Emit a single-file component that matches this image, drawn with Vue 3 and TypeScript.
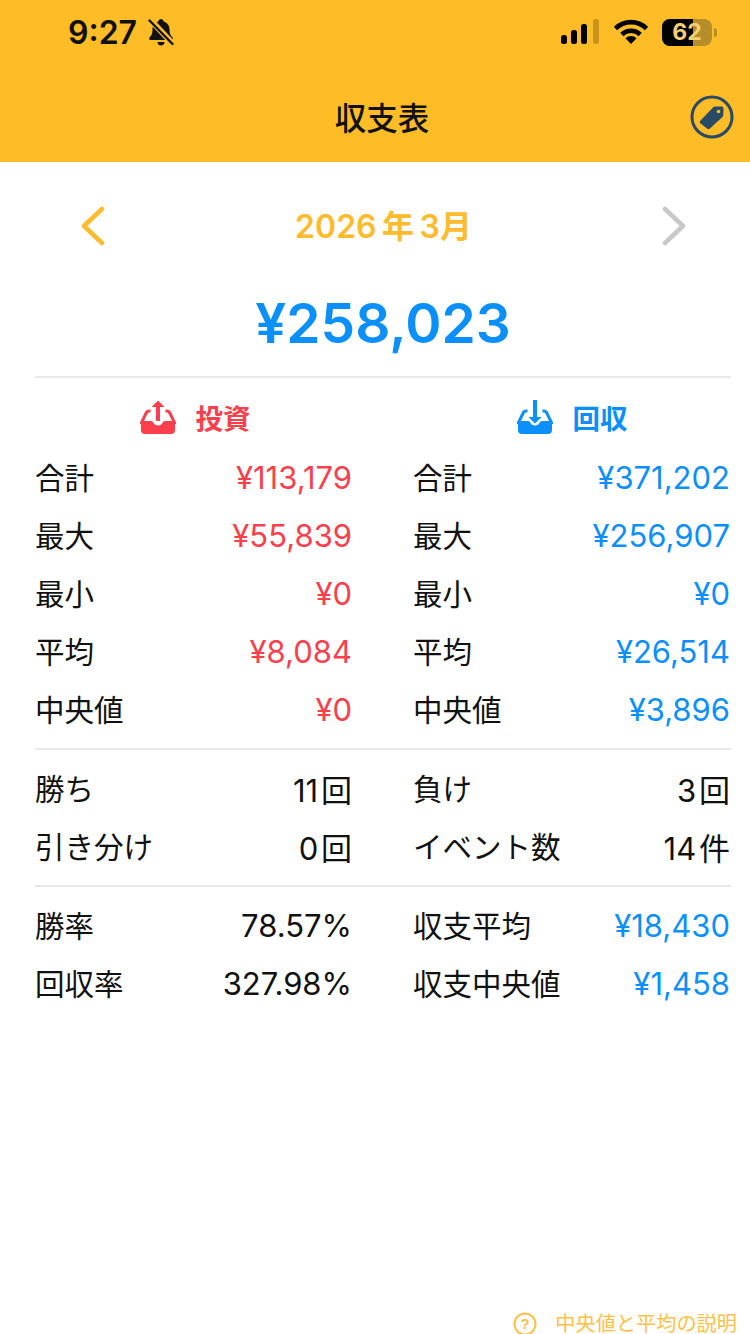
<script setup lang="ts">
type Row = { label: string; value: string; tone?: 'out' | 'in' }

const outRows: Row[] = [
  { label: '合計', value: '¥113,179', tone: 'out' },
  { label: '最大', value: '¥55,839', tone: 'out' },
  { label: '最小', value: '¥0', tone: 'out' },
  { label: '平均', value: '¥8,084', tone: 'out' },
  { label: '中央値', value: '¥0', tone: 'out' },
]
const inRows: Row[] = [
  { label: '合計', value: '¥371,202', tone: 'in' },
  { label: '最大', value: '¥256,907', tone: 'in' },
  { label: '最小', value: '¥0', tone: 'in' },
  { label: '平均', value: '¥26,514', tone: 'in' },
  { label: '中央値', value: '¥3,896', tone: 'in' },
]
const countLeft: Row[] = [
  { label: '勝ち', value: '11\u200a回' },
  { label: '引き分け', value: '0\u200a回' },
]
const countRight: Row[] = [
  { label: '負け', value: '3\u200a回' },
  { label: 'イベント数', value: '14\u200a件' },
]
const rateLeft: Row[] = [
  { label: '勝率', value: '78.57%' },
  { label: '回収率', value: '327.98%' },
]
const rateRight: Row[] = [
  { label: '収支平均', value: '¥18,430', tone: 'in' },
  { label: '収支中央値', value: '¥1,458', tone: 'in' },
]
const sections: Row[][][] = [
  [outRows, inRows],
  [countLeft, countRight],
  [rateLeft, rateRight],
]
</script>

<template>
  <div class="page">
    <header class="header">
      <div class="status">
        <div class="status-left">
          <span class="time">9:27</span>
          <svg class="bell" width="28" height="30" viewBox="0 0 28 30">
            <path d="M14 2c1.5 0 2.500 1 2.700 2.400 3.600 1 5.800 4.200 5.800 8.100 0 4 1 6 3 8 .8.900.3 2.500-1 2.500H3.500c-1.300 0-1.800-1.600-1-2.500 2-2 3-4 3-8 0-3.900 2.200-7.100 5.800-8.100C11.500 3 12.500 2 14 2z" fill="#111" />
            <path d="M10.500 25h7a3.500 3.500 0 0 1-7 0z" fill="#111" />
            <path d="M3 2.500 26 27" stroke="#febd26" stroke-width="6" />
            <path d="M2.500 3.500 25.500 27" stroke="#111" stroke-width="2.400" stroke-linecap="round" />
          </svg>
        </div>
        <div class="status-right">
          <svg width="40" height="28" viewBox="0 0 40 28">
            <rect x="1" y="17" width="6" height="9" rx="2.500" fill="#000" />
            <rect x="11" y="12" width="6" height="14" rx="2.500" fill="#000" />
            <rect x="21" y="6" width="6" height="20" rx="2.500" fill="#000" />
            <rect x="33" y="1" width="6" height="25" rx="2.500" fill="#000" opacity=".22" />
          </svg>
          <svg class="wifi" width="34" height="26" viewBox="0 0 34 26">
            <path d="M1.500 9.500a22 22 0 0 1 31 0" fill="none" stroke="#000" stroke-width="4.600" />
            <path d="M7.800 15.500a13.200 13.200 0 0 1 18.400 0" fill="none" stroke="#000" stroke-width="4.600" />
            <path d="M17 25l-5.600-5.800a8 8 0 0 1 11.200 0z" fill="#000" />
          </svg>
          <div class="battery">
            <div class="battery-body">
              <div class="battery-fill"></div>
              <span class="battery-num">62</span>
            </div>
            <span class="battery-cap"></span>
          </div>
        </div>
      </div>
      <div class="titlebar">
        <h1 class="title">収支表</h1>
        <svg class="tag" width="44" height="44" viewBox="0 0 44 44">
          <circle cx="22" cy="22" r="20" fill="none" stroke="#2b4a66" stroke-width="3" />
          <path d="M10.500 25.500 23 12.500c.6-.6 1.200-.9 2-.9l6.500-.2c1.200 0 2 .8 2 2l-.2 6.500c0 .8-.3 1.400-.9 2L20 33.500c-.9.900-2.100.9-3 0l-6.500-5c-1-1-1-2.100 0-3z" fill="#2b4a66" />
          <circle cx="28.500" cy="16.500" r="1.800" fill="#febd26" />
        </svg>
      </div>
    </header>

    <main class="body">
      <div class="month">
        <svg width="26" height="40" viewBox="0 0 26 40">
          <path d="M22 3 4 20l18 17" fill="none" stroke="#fdbb2d" stroke-width="4.500" stroke-linecap="round" stroke-linejoin="round" />
        </svg>
        <span class="month-label">2026<i class="gap"></i>年<i class="gap"></i>3月</span>
        <svg width="26" height="40" viewBox="0 0 26 40">
          <path d="M4 3l18 17L4 37" fill="none" stroke="#c8c8c8" stroke-width="4.500" stroke-linecap="round" stroke-linejoin="round" />
        </svg>
      </div>

      <div class="total">¥258,023</div>

      <div class="heads">
        <div class="head out">
          <svg width="36" height="36" viewBox="0 0 36 36">
            <path d="M18 1.500 11.500 8h4.500v14h4V8h4.500z" fill="#fb3f4c" />
            <path d="M10.500 12H9.300c-1.500 0-2.500.7-3.100 2L1.500 23.500H11c.6 0 1 .4 1.200 1 .7 2 3 3.500 5.800 3.500s5.100-1.500 5.800-3.500c.2-.6.600-1 1.200-1h9.500L29.800 14c-.6-1.300-1.600-2-3.100-2h-1.200" fill="none" stroke="#fb3f4c" stroke-width="3" />
            <path d="M1 23h10c.6 0 1 .3 1.200.9.800 2.300 3 3.600 5.800 3.600s5-1.300 5.800-3.600c.2-.6.600-.9 1.200-.9h10v8c0 2.500-1.500 4-4 4H5c-2.500 0-4-1.500-4-4z" fill="#fb3f4c" />
          </svg>
          <span>投資</span>
        </div>
        <div class="head in">
          <svg width="36" height="36" viewBox="0 0 36 36">
            <path d="M18 24.500l-6.500-6.500h4.500V1h4v17h4.500z" fill="#0b8ffb" />
            <path d="M10.500 12H9.300c-1.500 0-2.500.7-3.100 2L1.500 23.500H11c.6 0 1 .4 1.200 1 .7 2 3 3.500 5.800 3.500s5.100-1.500 5.800-3.500c.2-.6.600-1 1.200-1h9.500L29.800 14c-.6-1.300-1.600-2-3.100-2h-1.200" fill="none" stroke="#0b8ffb" stroke-width="3" />
            <path d="M1 23h10c.6 0 1 .3 1.200.9.800 2.300 3 3.600 5.800 3.600s5-1.300 5.800-3.600c.2-.6.600-.9 1.200-.9h10v8c0 2.500-1.500 4-4 4H5c-2.500 0-4-1.500-4-4z" fill="#0b8ffb" />
          </svg>
          <span>回収</span>
        </div>
      </div>

      <section v-for="(cols, i) in sections" :key="i" class="section">
        <div v-for="(col, j) in cols" :key="j" class="col">
          <div v-for="row in col" :key="row.label" class="row">
            <span class="label">{{ row.label }}</span>
            <span class="value" :class="row.tone">{{ row.value }}</span>
          </div>
        </div>
      </section>
    </main>

    <footer class="help">
      <svg width="24" height="24" viewBox="0 0 24 24">
        <circle cx="12" cy="12" r="10.500" fill="none" stroke="#fdc14a" stroke-width="2" />
        <text x="12" y="17" text-anchor="middle" class="help-q">?</text>
      </svg>
      <span>中央値と平均の説明</span>
    </footer>
  </div>
</template>

<style>
html,
body {
  margin: 0;
  background: #fff;
}
</style>

<style scoped>
.page {
  display: flex;
  flex-direction: column;
  width: 750px;
  height: 1334px;
  overflow: hidden;
  background: #fff;
  font-family: "Liberation Sans", "Noto Sans CJK JP", sans-serif;
  color: #111;
}

.header {
  flex: none;
  height: 162px;
  background: #febd26;
}

.status {
  display: flex;
  justify-content: space-between;
  align-items: center;
  height: 64px;
  padding: 0 33px 0 68px;
}

.status-left,
.status-right {
  display: flex;
  align-items: center;
}

.status-left {
  gap: 10px;
}

.status-right {
  gap: 14px;
}

.time {
  font-family: Inter, "Liberation Sans", sans-serif;
  font-size: 32px;
  font-weight: 600;
  color: #111;
}

.battery {
  display: flex;
  align-items: center;
  gap: 2px;
}

.battery-body {
  position: relative;
  width: 50px;
  height: 27px;
  border-radius: 8px;
  overflow: hidden;
  background: #b58e2b;
}

.battery-fill {
  width: 62%;
  height: 100%;
  background: #000;
}

.battery-num {
  position: absolute;
  inset: 0;
  text-align: center;
  line-height: 27px;
  font-family: Inter, "Liberation Sans", sans-serif;
  font-size: 23px;
  font-weight: 700;
  color: #f5cf73;
}

.battery-cap {
  width: 3px;
  height: 9px;
  border-radius: 0 3px 3px 0;
  background: #b58e2b;
}

.titlebar {
  position: relative;
  display: flex;
  justify-content: center;
  align-items: center;
  height: 98px;
  box-sizing: border-box;
  padding: 12px 0 0 14px;
}

.title {
  margin: 0;
  font-size: 31.5px;
  font-weight: 500;
  line-height: 40px;
}

.tag {
  position: absolute;
  right: 16px;
  top: 31px;
}

.body {
  padding: 0 19px 0 35px;
}

.month {
  display: flex;
  justify-content: space-between;
  align-items: center;
  height: 40px;
  margin-top: 44px;
  padding: 0 44px 0 45px;
}

.month-label {
  display: flex;
  align-items: baseline;
  padding: 0 0 4px 0;
  font-family: Inter, "Liberation Sans", "Noto Sans CJK JP", sans-serif;
  font-size: 32px;
  font-weight: 600;
  color: #fdbb2d;
}

.gap {
  width: 5.5px;
}

.total {
  margin-top: 42px;
  padding-bottom: 18px;
  border-bottom: 2px solid #e8e8e8;
  text-align: center;
  font-family: Inter, "Liberation Sans", sans-serif;
  font-size: 55px;
  font-weight: 600;
  line-height: 70px;
  color: #0b8ffb;
}

.heads {
  display: grid;
  grid-template-columns: 317px 318px;
  column-gap: 61px;
  margin: 21px 0 4px;
}

.head {
  display: flex;
  justify-content: center;
  align-items: center;
  gap: 20px;
  height: 36px;
  font-size: 27.5px;
  font-weight: 700;
}

.head.out {
  padding-left: 3px;
  color: #fb3f4c;
}

.head.in {
  color: #0b8ffb;
}

.section {
  display: grid;
  grid-template-columns: 317px 317px;
  column-gap: 61px;
  padding: 8px 1px 11px 0;
  border-bottom: 2px solid #e8e8e8;
}

.section:last-of-type {
  border-bottom: 0;
}

.row {
  display: flex;
  justify-content: space-between;
  align-items: center;
  height: 58px;
  font-size: 29.5px;
}

.label {
  padding-bottom: 1px;
}

.value {
  padding-top: 3px;
  font-family: Inter, "Liberation Sans", "Noto Sans CJK JP", sans-serif;
  font-size: 31px;
  color: #111;
}

.value.out {
  color: #fb3f4c;
}

.value.in {
  color: #0b8ffb;
}

.help {
  flex: none;
  display: flex;
  align-items: center;
  align-self: flex-end;
  gap: 18px;
  height: 20px;
  margin: auto 13px 0 0;
  font-size: 20.2px;
  line-height: 20px;
  color: #fdc14a;
}

.help-q {
  font-size: 15px;
  font-weight: 700;
  fill: #fdc14a;
}
</style>
